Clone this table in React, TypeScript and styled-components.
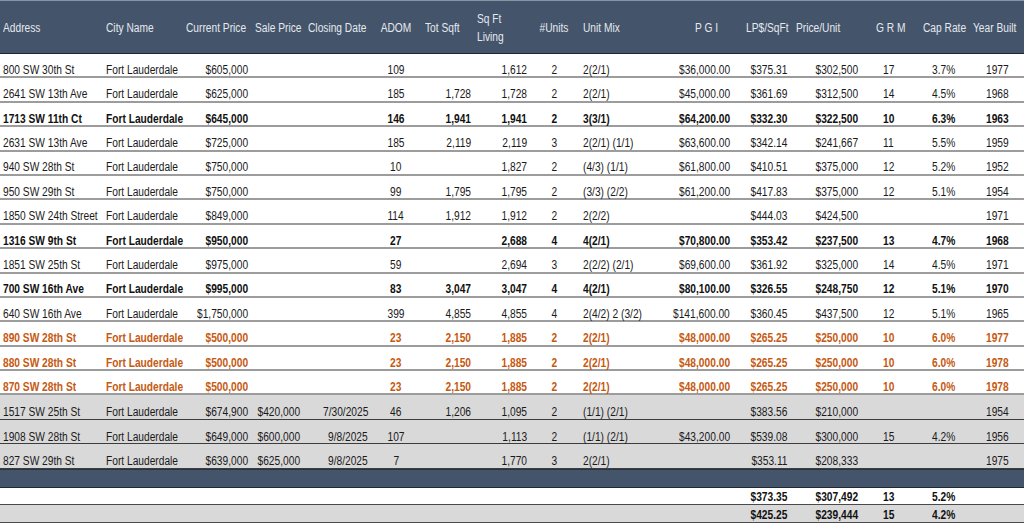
import React from 'react';
import styled, { createGlobalStyle } from 'styled-components';

const GlobalStyle = createGlobalStyle`
  html, body {
    margin: 0;
    padding: 0;
    background: #ffffff;
  }
  body {
    font-family: 'Liberation Sans', Arial, sans-serif;
    font-size: 12px;
    color: #1a1a1a;
  }
`;

type Align = 'left' | 'right' | 'center';
type Tone = 'normal' | 'bold' | 'orange' | 'sold';

interface Col {
  w: number;
  head: string[];
  ha: Align;
  hp: number;
  da: Align;
  dp: number;
}

// widths measured off the sheet, they add up to 1024
const cols: Col[] = [
  { w: 103, head: ['Address'], ha: 'left', hp: 3, da: 'left', dp: 3 },
  { w: 80, head: ['City Name'], ha: 'left', hp: 3, da: 'left', dp: 3 },
  { w: 69, head: ['Current Price'], ha: 'left', hp: 3, da: 'right', dp: 4 },
  { w: 52, head: ['Sale Price'], ha: 'left', hp: 3, da: 'right', dp: 4 },
  { w: 68, head: ['Closing Date'], ha: 'left', hp: 4, da: 'right', dp: 4 },
  { w: 48, head: ['ADOM'], ha: 'center', hp: 0, da: 'center', dp: 0 },
  { w: 55, head: ['Tot Sqft'], ha: 'left', hp: 5, da: 'right', dp: 4 },
  { w: 56, head: ['Sq Ft', 'Living'], ha: 'left', hp: 2, da: 'right', dp: 4 },
  { w: 47, head: ['#Units'], ha: 'center', hp: 0, da: 'center', dp: 0 },
  { w: 94, head: ['Unit Mix'], ha: 'left', hp: 5, da: 'left', dp: 5 },
  { w: 62, head: ['P G I'], ha: 'left', hp: 23, da: 'right', dp: 4 },
  { w: 57, head: ['LP$/SqFt'], ha: 'left', hp: 12, da: 'right', dp: 4 },
  { w: 71, head: ['Price/Unit'], ha: 'left', hp: 5, da: 'right', dp: 4 },
  { w: 50, head: ['G R M'], ha: 'left', hp: 14, da: 'left', dp: 21 },
  { w: 56, head: ['Cap Rate'], ha: 'left', hp: 11, da: 'right', dp: 13 },
  { w: 56, head: ['Year Built'], ha: 'left', hp: 5, da: 'right', dp: 15 },
];

const template = cols.map((c) => `${c.w}px`).join(' ');

const FL = 'Fort Lauderdale';

const rows: { tone: Tone; cells: string[] }[] = [
  { tone: 'normal', cells: ['800 SW 30th St', FL, '$605,000', '', '', '109', '', '1,612', '2', '2(2/1)', '$36,000.00', '$375.31', '$302,500', '17', '3.7%', '1977'] },
  { tone: 'normal', cells: ['2641 SW 13th Ave', FL, '$625,000', '', '', '185', '1,728', '1,728', '2', '2(2/1)', '$45,000.00', '$361.69', '$312,500', '14', '4.5%', '1968'] },
  { tone: 'bold', cells: ['1713 SW 11th Ct', FL, '$645,000', '', '', '146', '1,941', '1,941', '2', '3(3/1)', '$64,200.00', '$332.30', '$322,500', '10', '6.3%', '1963'] },
  { tone: 'normal', cells: ['2631 SW 13th Ave', FL, '$725,000', '', '', '185', '2,119', '2,119', '3', '2(2/1) (1/1)', '$63,600.00', '$342.14', '$241,667', '11', '5.5%', '1959'] },
  { tone: 'normal', cells: ['940 SW 28th St', FL, '$750,000', '', '', '10', '', '1,827', '2', '(4/3) (1/1)', '$61,800.00', '$410.51', '$375,000', '12', '5.2%', '1952'] },
  { tone: 'normal', cells: ['950 SW 29th St', FL, '$750,000', '', '', '99', '1,795', '1,795', '2', '(3/3) (2/2)', '$61,200.00', '$417.83', '$375,000', '12', '5.1%', '1954'] },
  { tone: 'normal', cells: ['1850 SW 24th Street', FL, '$849,000', '', '', '114', '1,912', '1,912', '2', '2(2/2)', '', '$444.03', '$424,500', '', '', '1971'] },
  { tone: 'bold', cells: ['1316 SW 9th St', FL, '$950,000', '', '', '27', '', '2,688', '4', '4(2/1)', '$70,800.00', '$353.42', '$237,500', '13', '4.7%', '1968'] },
  { tone: 'normal', cells: ['1851 SW 25th St', FL, '$975,000', '', '', '59', '', '2,694', '3', '2(2/2) (2/1)', '$69,600.00', '$361.92', '$325,000', '14', '4.5%', '1971'] },
  { tone: 'bold', cells: ['700 SW 16th Ave', FL, '$995,000', '', '', '83', '3,047', '3,047', '4', '4(2/1)', '$80,100.00', '$326.55', '$248,750', '12', '5.1%', '1970'] },
  { tone: 'normal', cells: ['640 SW 16th Ave', FL, '$1,750,000', '', '', '399', '4,855', '4,855', '4', '2(4/2) 2 (3/2)', '$141,600.00', '$360.45', '$437,500', '12', '5.1%', '1965'] },
  { tone: 'orange', cells: ['890 SW 28th St', FL, '$500,000', '', '', '23', '2,150', '1,885', '2', '2(2/1)', '$48,000.00', '$265.25', '$250,000', '10', '6.0%', '1977'] },
  { tone: 'orange', cells: ['880 SW 28th St', FL, '$500,000', '', '', '23', '2,150', '1,885', '2', '2(2/1)', '$48,000.00', '$265.25', '$250,000', '10', '6.0%', '1978'] },
  { tone: 'orange', cells: ['870 SW 28th St', FL, '$500,000', '', '', '23', '2,150', '1,885', '2', '2(2/1)', '$48,000.00', '$265.25', '$250,000', '10', '6.0%', '1978'] },
  { tone: 'sold', cells: ['1517 SW 25th St', FL, '$674,900', '$420,000', '7/30/2025', '46', '1,206', '1,095', '2', '(1/1) (2/1)', '', '$383.56', '$210,000', '', '', '1954'] },
  { tone: 'sold', cells: ['1908 SW 28th St', FL, '$649,000', '$600,000', '9/8/2025', '107', '', '1,113', '2', '(1/1) (2/1)', '$43,200.00', '$539.08', '$300,000', '15', '4.2%', '1956'] },
  { tone: 'sold', cells: ['827 SW 29th St', FL, '$639,000', '$625,000', '9/8/2025', '7', '', '1,770', '3', '2(2/1)', '', '$353.11', '$208,333', '', '', '1975'] },
];

const blank = (vals: Record<number, string>) => cols.map((_, i) => vals[i] ?? '');

const totals = [
  { shade: false, cells: blank({ 11: '$373.35', 12: '$307,492', 13: '13', 14: '5.2%' }) },
  { shade: true, cells: blank({ 11: '$425.25', 12: '$239,444', 13: '15', 14: '4.2%' }) },
];

const justify = (a: Align) => (a === 'center' ? 'center' : a === 'right' ? 'flex-end' : 'flex-start');

const Sheet = styled.div`
  width: 1024px;
  height: 524px;
  overflow: hidden;
  display: flex;
  flex-direction: column;
`;

// no narrow face is installed, so the sheet's narrow font is squeezed
const Narrow = styled.span<{ $align: Align }>`
  display: inline-block;
  transform: scaleX(0.85);
  transform-origin: ${({ $align }) => $align} center;
`;

const HeadRow = styled.div`
  display: grid;
  grid-template-columns: ${template};
  height: 54px;
  box-sizing: border-box;
  background: #44546a;
  border-top: 1px solid #8795a8;
  border-bottom: 1px solid #1f2733;
`;

const HeadCell = styled.div<{ $align: Align; $pad: number }>`
  display: flex;
  flex-direction: column;
  justify-content: center;
  align-items: ${({ $align }) => justify($align)};
  padding: 1px 0 0 ${({ $pad }) => $pad}px;
  color: #e4e9f0;
  line-height: 18px;
  white-space: nowrap;
`;

const toneColor: Record<Tone, string> = {
  normal: '#1a1a1a',
  bold: '#111111',
  orange: '#c65911',
  sold: '#1a1a1a',
};

const DataRow = styled.div<{ $tone: Tone }>`
  display: grid;
  grid-template-columns: ${template};
  height: 24.4px;
  box-sizing: border-box;
  background: ${({ $tone }) => ($tone === 'sold' ? '#d9d9d9' : '#ffffff')};
  border-bottom: ${({ $tone }) => ($tone === 'sold' ? '1.5px solid #3d3d3d' : '2px solid #9c9c9c')};
  color: ${({ $tone }) => toneColor[$tone]};
  font-weight: ${({ $tone }) => ($tone === 'bold' || $tone === 'orange' ? 700 : 400)};
`;

const Cell = styled.div<{ $align: Align; $pl: number; $pr: number }>`
  display: flex;
  align-items: flex-end;
  justify-content: ${({ $align }) => justify($align)};
  padding: 0 ${({ $pr }) => $pr}px 0.5px ${({ $pl }) => $pl}px;
  white-space: nowrap;
  line-height: 12px;
`;

const Band = styled.div`
  height: 19px;
  box-sizing: border-box;
  background: #44546a;
  border-top: 1px solid #2a3442;
  border-bottom: 1.5px solid #1f2733;
`;

const TotalRow = styled.div<{ $shade: boolean }>`
  display: grid;
  grid-template-columns: ${template};
  height: ${({ $shade }) => ($shade ? 18 : 17)}px;
  box-sizing: border-box;
  background: ${({ $shade }) => ($shade ? '#d9d9d9' : '#ffffff')};
  border-bottom: 1.5px solid #4a4a4a;
  font-weight: 700;
  color: #111111;
`;

const TotalCell = styled(Cell)`
  padding-bottom: 0.5px;
`;

const cellProps = (c: Col) => ({
  $align: c.da,
  $pl: c.da === 'left' ? c.dp : 0,
  $pr: c.da === 'right' ? c.dp : 0,
});

export default function App() {
  return (
    <>
      <GlobalStyle />
      <Sheet>
        <HeadRow>
          {cols.map((c, i) => (
            <HeadCell key={i} $align={c.ha} $pad={c.hp}>
              {c.head.map((line) => (
                <Narrow key={line} $align={c.ha}>
                  {line}
                </Narrow>
              ))}
            </HeadCell>
          ))}
        </HeadRow>
        {rows.map((r, ri) => (
          <DataRow key={ri} $tone={r.tone}>
            {r.cells.map((v, ci) => (
              <Cell key={ci} {...cellProps(cols[ci])}>
                {v && <Narrow $align={cols[ci].da}>{v}</Narrow>}
              </Cell>
            ))}
          </DataRow>
        ))}
        <Band />
        {totals.map((t, ti) => (
          <TotalRow key={ti} $shade={t.shade}>
            {t.cells.map((v, ci) => (
              <TotalCell key={ci} {...cellProps(cols[ci])}>
                {v && <Narrow $align={cols[ci].da}>{v}</Narrow>}
              </TotalCell>
            ))}
          </TotalRow>
        ))}
      </Sheet>
    </>
  );
}
